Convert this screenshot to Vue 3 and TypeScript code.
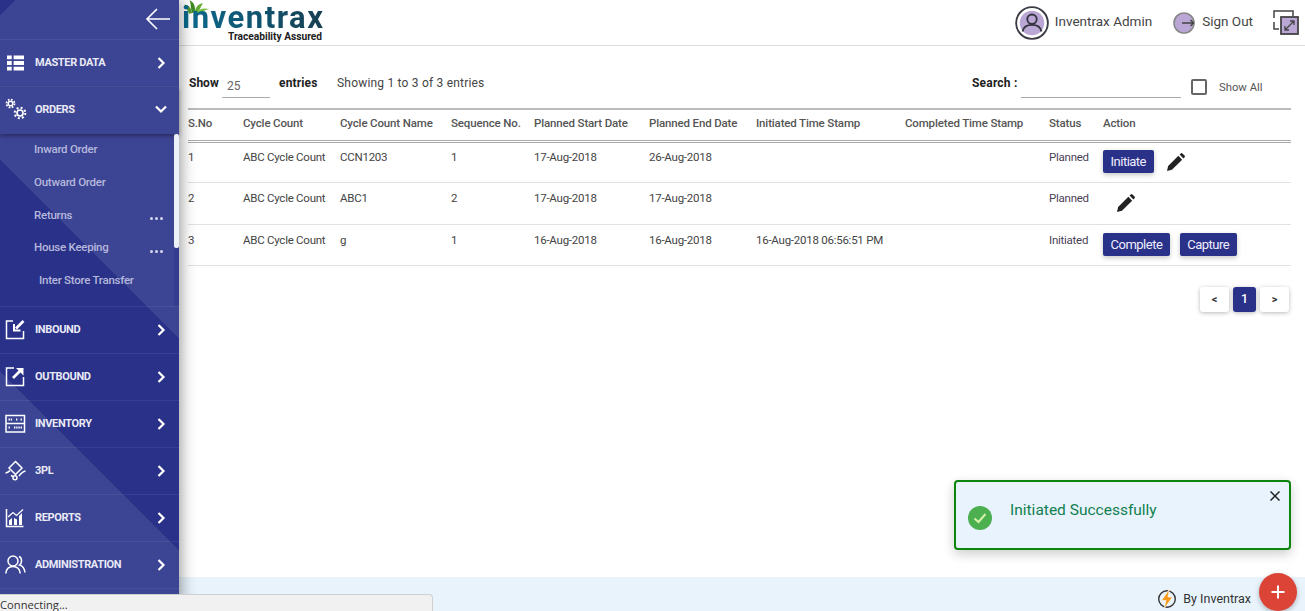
<script setup lang="ts">
interface NavItem { label: string; icon: string; open?: boolean }
const topNav: NavItem[] = [
  { label: 'MASTER DATA', icon: 'grid' },
  { label: 'ORDERS', icon: 'gears', open: true },
]
const subNav = [
  { label: 'Inward Order', more: false, inset: false },
  { label: 'Outward Order', more: false, inset: false },
  { label: 'Returns', more: true, inset: false },
  { label: 'House Keeping', more: true, inset: false },
  { label: 'Inter Store Transfer', more: false, inset: true },
]
const bottomNav: NavItem[] = [
  { label: 'INBOUND', icon: 'in' },
  { label: 'OUTBOUND', icon: 'out' },
  { label: 'INVENTORY', icon: 'abacus' },
  { label: '3PL', icon: 'tpl' },
  { label: 'REPORTS', icon: 'chart' },
  { label: 'ADMINISTRATION', icon: 'users' },
]
const columns = ['S.No', 'Cycle Count', 'Cycle Count Name', 'Sequence No.', 'Planned Start Date', 'Planned End Date', 'Initiated Time Stamp', 'Completed Time Stamp', 'Status', 'Action']
const widths = [55, 97, 111, 83, 115, 107, 149, 144, 54, 188]
const rows = [
  { no: '1', cc: 'ABC Cycle Count', name: 'CCN1203', seq: '1', start: '17-Aug-2018', end: '26-Aug-2018', init: '', done: '', status: 'Planned', kind: 'a' },
  { no: '2', cc: 'ABC Cycle Count', name: 'ABC1', seq: '2', start: '17-Aug-2018', end: '17-Aug-2018', init: '', done: '', status: 'Planned', kind: 'b' },
  { no: '3', cc: 'ABC Cycle Count', name: 'g', seq: '1', start: '16-Aug-2018', end: '16-Aug-2018', init: '16-Aug-2018 06:56:51 PM', done: '', status: 'Initiated', kind: 'c' },
]
</script>

<template>
  <div class="page">
    <aside class="side">
      <div class="back">
        <svg width="26" height="22" viewBox="0 0 26 22" fill="none" stroke="#fff" stroke-width="1.6"><path d="M25 11H2M12 1 2 11l10 10" /></svg>
      </div>
      <template v-for="n in topNav" :key="n.label">
        <div class="nav" :class="{ open: n.open }">
          <span class="ico">
            <svg v-if="n.icon === 'grid'" width="17" height="18" viewBox="0 0 18 18" fill="#fff">
              <path d="M0 1h5v4H0zM7 1h11v4H7zM0 7h5v4H0zM7 7h11v4H7zM0 13h5v4H0zM7 13h11v4H7z" />
            </svg>
            <svg v-else width="22" height="22" viewBox="0 0 22 22" fill="none" stroke="#fff">
              <circle cx="5.500" cy="5.500" r="2.300" stroke-width="1.500" />
              <circle cx="5.500" cy="5.500" r="4" stroke-width="1.800" stroke-dasharray="1.700 1.440" />
              <circle cx="15" cy="15" r="3" stroke-width="1.700" />
              <circle cx="15" cy="15" r="5.300" stroke-width="2" stroke-dasharray="2 2.160" />
            </svg>
          </span>
          <span class="lab">{{ n.label }}</span>
          <svg class="chev" width="12" height="12" viewBox="0 0 12 12" fill="none" stroke="#fff" stroke-width="2.200">
            <path v-if="n.open" d="M1 3.500 6 8.500l5-5" />
            <path v-else d="M3.500 1 8.500 6l-5 5" />
          </svg>
        </div>
      </template>
      <div class="sub">
        <div v-for="s in subNav" :key="s.label" class="subitem" :class="{ inset: s.inset }">
          <span>{{ s.label }}</span>
          <i v-if="s.more" class="dots"><b></b><b></b><b></b></i>
        </div>
        <div class="thumb"></div>
      </div>
      <div v-for="n in bottomNav" :key="n.label" class="nav">
        <span class="ico">
          <svg width="21" height="21" viewBox="0 0 21 21" fill="none" stroke="#fff" stroke-width="1.500">
            <template v-if="n.icon === 'in'">
              <path d="M8 2H1.500v17.500h17V12" />
              <path d="M18.500 2 11 9.500" stroke-width="2.600" />
              <path d="M9 5v6.500h6.500" stroke-width="2" />
            </template>
            <template v-else-if="n.icon === 'out'">
              <path d="M9 2H1.500v17.500h17V11" />
              <path d="M8 12 16 4" stroke-width="2.600" />
              <path d="M11 2h7.500v7.500z" fill="#fff" stroke="none" />
            </template>
            <template v-else-if="n.icon === 'abacus'">
              <rect x="1" y="2.500" width="18.500" height="16.500" />
              <path d="M1 10.500h18.500" />
              <path d="M3.500 6.500h4M11 6.500h2M15.500 6.500h2M3.500 14.500h2M9 14.500h8" stroke-width="2" stroke-dasharray="1.400 .8" />
            </template>
            <template v-else-if="n.icon === 'tpl'">
              <path d="M10.500 1.500 17 8l-6.500 6.500L4 8z" />
              <path d="M.5 13c2-.2 3-1 4.500-2.400M20.500 11c-2.500.3-4.500 2.500-6.500 5M6 15.500l2 1" />
              <circle cx="10" cy="17.800" r="2" />
            </template>
            <template v-else-if="n.icon === 'chart'">
              <path d="M1.500 2v17.500h17" />
              <path d="M3 10 8 5.500l3.500 3L18 2.500" stroke-width="1.300" />
              <path d="M4 18v-4.500l3-2.500v7zM9 18v-7l3 1.500V18zM14 18v-9l3-3v12z" fill="#fff" stroke="none" />
            </template>
            <template v-else>
              <circle cx="8" cy="7" r="5" />
              <path d="M.8 19.500c.5-5 3-7 7.200-7s6.700 2 7.200 7" />
              <path d="M14 2.500c3 .8 3.500 6.500.5 8.500 3 .8 5 3.500 5.500 7.500" />
            </template>
          </svg>
        </span>
        <span class="lab">{{ n.label }}</span>
        <svg class="chev" width="12" height="12" viewBox="0 0 12 12" fill="none" stroke="#fff" stroke-width="2.200"><path d="M3.500 1 8.500 6l-5 5" /></svg>
      </div>
    </aside>

    <div class="main">
      <header class="top">
        <div class="logo">
          <svg class="leaf" width="27" height="15" viewBox="0 0 30 16">
            <path d="M6 15C3 10 2 6 0 5c4-1 8 3 9 9z" fill="#4f9a2c" />
            <path d="M9 14C7 8 8 3 6 0c5 2 7 7 6 13z" fill="#3f8a24" />
            <path d="M12 14c0-6 4-10 9-11-2 3-3 9-8 11z" fill="#63ad35" />
            <path d="M13 15c3-5 8-7 15-5-4 0-8 4-15 5z" fill="#7abf45" />
          </svg>
          <div class="brand">inventrax</div>
          <div class="tag">Traceability Assured</div>
        </div>
        <div class="tools">
          <svg width="34" height="34" viewBox="0 0 36 36">
            <circle cx="18" cy="18" r="16.800" fill="#fff" stroke="#3b3b45" stroke-width="2" />
            <circle cx="18" cy="18" r="13" fill="#bba7d6" />
            <circle cx="18" cy="14" r="5" fill="none" stroke="#33333d" stroke-width="2" />
            <path d="M8 27c1-5 5-7 10-7s9 2 10 7" fill="none" stroke="#33333d" stroke-width="2" />
          </svg>
          <span class="user">Inventrax Admin</span>
          <svg class="sign" width="24" height="24" viewBox="0 0 24 24">
            <circle cx="12" cy="12" r="10" fill="#bba7d6" stroke="#888" stroke-width="1.600" />
            <path d="M10 12h12M18.500 9l3 3-3 3" fill="none" stroke="#444" stroke-width="1.400" />
          </svg>
          <span class="out">Sign Out</span>
          <svg class="exp" width="26" height="25" viewBox="0 0 26 25" fill="none" stroke="#444" stroke-width="1.500">
            <path d="M1 8V1h19v5M1 12v7h5" />
            <rect x="8" y="7" width="17" height="17" fill="#bba7d6" stroke-width="1.800" />
            <path d="M12 20l9-9M17 11h4v4M12 16v4h4" stroke-width="1.300" />
          </svg>
        </div>
      </header>

      <main class="content">
        <div class="bar">
          <b class="show">Show</b>
          <span class="len">25</span>
          <b class="ent">entries</b>
          <span class="info">Showing 1 to 3 of 3 entries</span>
          <b class="search">Search :</b>
          <span class="sinput"></span>
          <span class="box"></span>
          <span class="all">Show All</span>
        </div>
        <table class="tbl">
          <colgroup><col v-for="(w, i) in widths" :key="i" :style="{ width: w + 'px' }" /></colgroup>
          <thead><tr><th v-for="c in columns" :key="c">{{ c }}</th></tr></thead>
          <tbody>
            <tr v-for="r in rows" :key="r.no">
              <td>{{ r.no }}</td><td>{{ r.cc }}</td><td>{{ r.name }}</td><td>{{ r.seq }}</td>
              <td>{{ r.start }}</td><td>{{ r.end }}</td><td>{{ r.init }}</td><td>{{ r.done }}</td>
              <td class="st">{{ r.status }}</td>
              <td class="act">
                <div class="acts" :class="r.kind">
                  <button v-if="r.kind === 'a'" class="btn">Initiate</button>
                  <button v-if="r.kind === 'c'" class="btn">Complete</button>
                  <button v-if="r.kind === 'c'" class="btn">Capture</button>
                  <svg v-if="r.kind !== 'c'" class="pen" width="18" height="18" viewBox="0 0 19 19" fill="#222">
                    <path d="M0 19l1.200-5.200L12 3l4 4L5.200 17.800zM13.300 1.700l1.200-1.200a1.300 1.300 0 0 1 1.800 0l2.200 2.200a1.300 1.300 0 0 1 0 1.800l-1.200 1.200z" />
                  </svg>
                </div>
              </td>
            </tr>
          </tbody>
        </table>
        <div class="pager">
          <span class="pg">&lt;</span>
          <span class="pg cur">1</span>
          <span class="pg">&gt;</span>
        </div>
      </main>

      <footer class="foot">
        <svg width="20" height="20" viewBox="0 0 20 20">
          <circle cx="10" cy="10" r="8.300" fill="none" stroke="#333" stroke-width="1.400" />
          <path d="M12.500 0 4.500 11.500h4.500L7 20l8.500-12H11z" fill="#f59a1b" stroke="#fff" stroke-width=".6" />
        </svg>
        <span>By Inventrax</span>
      </footer>
    </div>

    <div class="toast">
      <svg class="ok" width="24" height="24" viewBox="0 0 24 24">
        <circle cx="12" cy="12" r="12" fill="#4caf50" />
        <path d="M6.500 12.500 10.500 16l7-8" fill="none" stroke="#d4f2a8" stroke-width="2" />
      </svg>
      <span class="msg">Initiated Successfully</span>
      <svg class="x" width="10" height="10" viewBox="0 0 10 10" stroke="#222" stroke-width="1.500"><path d="M.5.5l9 9M9.500.5l-9 9" /></svg>
    </div>
    <div class="fab">
      <svg width="16" height="16" viewBox="0 0 16 16" stroke="#fff" stroke-width="2"><path d="M8 1.500v13M1.500 8h13" /></svg>
    </div>
    <div class="conn">Connecting...</div>
  </div>
</template>

<style scoped>
.page {
  position: relative;
  display: flex;
  width: 1305px;
  height: 611px;
  overflow: hidden;
  background: #fff;
  font-family: Roboto, "Liberation Sans", sans-serif;
  color: #333;
}
.side {
  flex: 0 0 179px;
  width: 179px;
  height: 611px;
  z-index: 2;
  box-shadow: 2px 0 14px rgba(0, 0, 0, .4);
  background:
    linear-gradient(135deg, #2a3188 0 11px, transparent 11px),
    linear-gradient(45deg, #3c4494 0 169px, #2a3188 169px 319px, #3c4494 319px);
}
.back {
  height: 40px;
  box-sizing: border-box;
  padding: 8px 0 0 145px;
  border-bottom: 1px solid rgba(255, 255, 255, .07);
}
.nav {
  position: relative;
  display: flex;
  align-items: center;
  height: 47px;
  box-sizing: border-box;
  padding-bottom: 1px;
  border-bottom: 1px solid rgba(255, 255, 255, .07);
  color: #e9eaf6;
  font-size: 11px;
  letter-spacing: -.35px;
  font-weight: 700;
}
.nav.open {
  box-shadow: 0 2px 4px rgba(0, 0, 0, .35);
  border-bottom: 0;
  padding-bottom: 3px;
}
.ico {
  display: flex;
  justify-content: center;
  width: 31px;
  margin-right: 4px;
}
.lab { flex: 1; }
.chev { margin-right: 12px; }
.sub {
  position: relative;
  height: 173px;
  box-sizing: border-box;
  border-bottom: 1px solid rgba(255, 255, 255, .07);
}
.subitem {
  display: flex;
  align-items: center;
  justify-content: space-between;
  height: 32.700px;
  box-sizing: border-box;
  padding: 0 16px 2px 34px;
  color: #b5b8dc;
  font-size: 11.500px;
  letter-spacing: -.25px;
  font-weight: 500;
}
.subitem.inset { padding-left: 39px; }
.dots { display: flex; gap: 2px; margin-top: 8px; }
.dots b { width: 3px; height: 3px; border-radius: 50%; background: #d6d8ee; }
.thumb {
  position: absolute;
  right: 0;
  top: 0;
  width: 5px;
  height: 114px;
  background: #eef0f8;
  border-radius: 2px;
}
.sub::after {
  content: "";
  position: absolute;
  right: 0;
  top: 114px;
  bottom: 0;
  width: 5px;
  background: #343c90;
}
.main {
  flex: 1;
  min-width: 0;
  display: flex;
  flex-direction: column;
}
.top {
  display: flex;
  justify-content: space-between;
  height: 46px;
  box-sizing: border-box;
  border-bottom: 1px solid #ddd;
}
.logo {
  position: relative;
  width: 145px;
  height: 45px;
  margin-left: 3px;
}
.leaf { position: absolute; left: 2px; top: 0; }
.brand {
  position: absolute;
  left: 0;
  top: 4px;
  font-family: Roboto, sans-serif;
  font-size: 31px;
  line-height: 28px;
  font-weight: 700;
  letter-spacing: 1.500px;
  background: linear-gradient(90deg, #0a6b8f, #173f52);
  -webkit-background-clip: text;
  background-clip: text;
  color: transparent;
  white-space: nowrap;
}
.tag {
  position: absolute;
  left: 46px;
  top: 31px;
  font-size: 10.200px;
  line-height: 12px;
  font-weight: 700;
  color: #222;
  white-space: nowrap;
}
.tools {
  display: flex;
  align-items: center;
  padding-right: 6px;
  font-size: 13.500px;
  color: #444;
}
.user { margin: -3px 0 0 6px; }
.sign { margin-left: 20px; }
.out { margin: -3px 0 0 6px; }
.exp { margin-left: 20px; }
.content {
  flex: 1;
  min-height: 0;
  padding: 0 14px 0 9px;
}
.bar {
  display: flex;
  align-items: flex-start;
  height: 62px;
  box-sizing: border-box;
  padding-top: 30px;
  font-size: 12px;
  line-height: 14px;
  color: #222;
}
.bar b { font-weight: 700; }
.show { width: 33px; margin-left: 1px; }
.len {
  width: 43px;
  height: 21px;
  padding-left: 5px;
  line-height: 20px;
  color: #666;
  font-size: 12px;
  border-bottom: 1px solid #aaa;
}
.ent { width: 58px; margin-left: 9px; letter-spacing: .15px; }
.info { width: 635px; color: #444; letter-spacing: .2px; }
.search { width: 49px; letter-spacing: .2px; }
.sinput {
  width: 160px;
  height: 21px;
  border-bottom: 1px solid #aaa;
}
.box {
  width: 12px;
  height: 12px;
  margin: 3px 0 0 10px;
  border: 2px solid #666;
  border-radius: 2px;
}
.all {
  margin: 5px 0 0 12px;
  font-size: 11.300px;
  color: #555;
}
.tbl {
  width: 1103px;
  table-layout: fixed;
  border-collapse: collapse;
  font-size: 11.500px;
  letter-spacing: -.25px;
  line-height: 14px;
  border-top: 2px solid #bbb;
}
.tbl th {
  height: 32px;
  padding: 0 0 3px;
  box-sizing: border-box;
  text-align: left;
  font-weight: 500;
  letter-spacing: -.15px;
  color: #555;
  border-bottom: 3px double #aaa;
  white-space: nowrap;
}
.tbl td {
  height: 41px;
  padding: 8px 0 0;
  box-sizing: border-box;
  vertical-align: top;
  color: #444;
  border-bottom: 1px solid #e2e2e2;
  white-space: nowrap;
}
.tbl tr:first-child td { padding-top: 7px; }
.tbl tr:nth-child(2) td { height: 42px; }
.tbl td.st { color: #4a3f55; }
.tbl tr td.act, .tbl tr:first-child td.act { padding-top: 0; }
.acts {
  display: flex;
  align-items: flex-start;
  padding-top: 7px;
}
.acts.b { padding-top: 10px; }
.acts.c { gap: 10px; padding-top: 8px; }
.btn {
  height: 23px;
  padding: 0 7.500px;
  border: 0;
  border-radius: 2px;
  background: #2a3188;
  color: #eef;
  font: 400 13px/23px Roboto, sans-serif;
  letter-spacing: -.5px;
  box-shadow: 0 2px 5px rgba(0, 0, 0, .22);
}
.acts.a .pen { margin: 3px 0 0 13px; }
.acts.b .pen { margin: 1px 0 0 14px; }
.pager {
  display: flex;
  justify-content: flex-end;
  gap: 4px;
  padding: 21px 2px 0 0;
}
.pg {
  width: 29px;
  height: 25px;
  border-radius: 3px;
  background: #fff;
  box-shadow: 0 1px 4px rgba(0, 0, 0, .28);
  text-align: center;
  font-size: 11px;
  font-weight: 700;
  line-height: 25px;
  color: #333;
}
.pg.cur {
  width: 23px;
  background: #2a3188;
  color: #fff;
  font-size: 12.500px;
  font-weight: 500;
  line-height: 23px;
}
.foot {
  display: flex;
  align-items: center;
  justify-content: flex-end;
  gap: 6px;
  height: 34px;
  box-sizing: border-box;
  padding: 9px 54px 0 0;
  background: #e8f3fc;
  font-size: 12.500px;
  color: #333;
}
.toast {
  position: absolute;
  left: 954px;
  top: 480px;
  width: 337px;
  height: 70px;
  box-sizing: border-box;
  border: 2px solid #0b850b;
  border-radius: 4px;
  background: #e8f3fd;
  box-shadow: 0 4px 12px rgba(0, 0, 0, .2);
  z-index: 3;
}
.ok { position: absolute; left: 12px; top: 24px; }
.msg {
  position: absolute;
  left: 54px;
  top: 19px;
  font-size: 15.500px;
  line-height: 19px;
  color: #11804f;
}
.x { position: absolute; right: 9px; top: 9px; }
.fab {
  position: absolute;
  left: 1259px;
  top: 573px;
  display: flex;
  align-items: center;
  justify-content: center;
  width: 38px;
  height: 38px;
  border-radius: 50%;
  background: #dc4437;
  box-shadow: 0 2px 5px rgba(0, 0, 0, .25);
  z-index: 3;
}
.conn {
  position: absolute;
  left: 0;
  top: 594px;
  width: 433px;
  height: 17px;
  box-sizing: border-box;
  padding-top: 2px;
  background: #f1f1f1;
  border: 1px solid #cfcfcf;
  border-left: 0;
  border-bottom: 0;
  border-top-right-radius: 4px;
  font-family: "Open Sans", sans-serif;
  font-size: 11.200px;
  line-height: 15px;
  color: #333;
  z-index: 4;
}
</style>

<style>
html, body { margin: 0; overflow: hidden; background: #fff; }
</style>
